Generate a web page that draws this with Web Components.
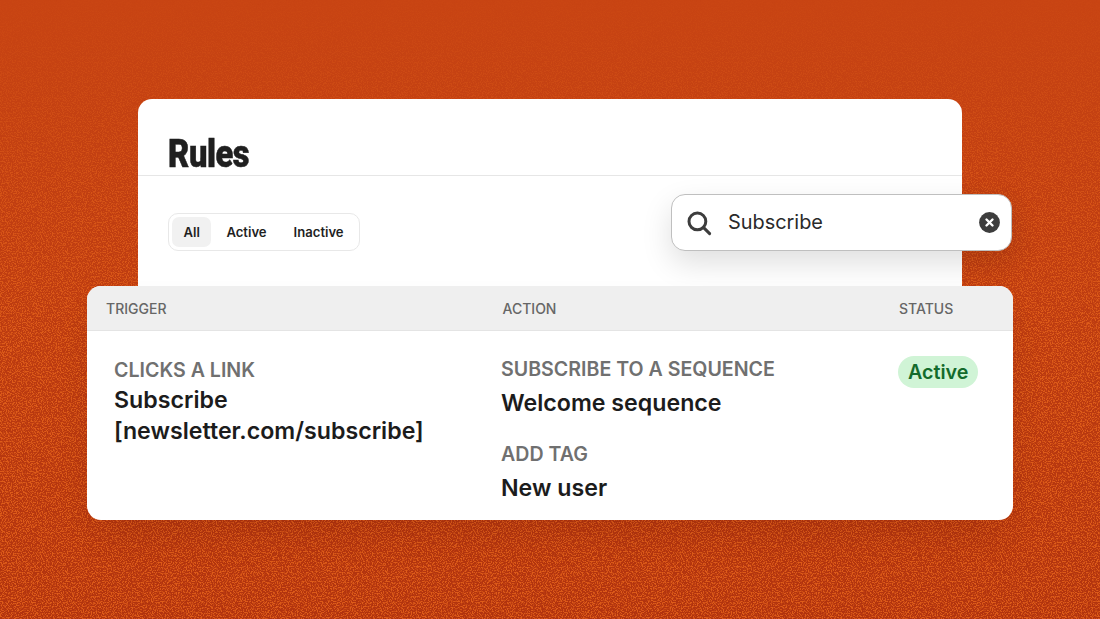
<!DOCTYPE html>
<html lang="en">
<head>
<meta charset="utf-8">
<title>Rules</title>
<style>
  html, body { margin: 0; height: 100%; overflow: hidden; }
  body { font-family: "Inter", "Liberation Sans", sans-serif; }
</style>
</head>
<body>
<noise-backdrop>
  <rules-card>
    <search-pill slot="search" value="Subscribe"></search-pill>
  </rules-card>
  <rules-table>
    <rule-entry slot="trigger" label="CLICKS A LINK">Subscribe<br>[newsletter.com/subscribe]</rule-entry>
    <rule-entry slot="action" label="SUBSCRIBE TO A SEQUENCE">Welcome sequence</rule-entry>
    <rule-entry slot="action" label="ADD TAG">New user</rule-entry>
    <status-badge slot="status">Active</status-badge>
  </rules-table>
</noise-backdrop>

<script>
class NoiseBackdrop extends HTMLElement {
  constructor() {
    super();
    const shadow = this.attachShadow({ mode: 'open' });
    shadow.innerHTML = `
      <style>
        :host {
          display: flex;
          flex-direction: column;
          align-items: center;
          position: relative;
          width: 1100px;
          height: 619px;
          padding-top: 99px;
          box-sizing: border-box;
          overflow: hidden;
          background: linear-gradient(180deg, #c84413 0%, #bf3d11 40%, #b1330e 100%);
        }
        svg {
          position: absolute;
          inset: 0;
          width: 100%;
          height: 100%;
          -webkit-mask-image: linear-gradient(180deg, rgba(0,0,0,.08) 0, rgba(0,0,0,.7) 190px, #000 330px);
          mask-image: linear-gradient(180deg, rgba(0,0,0,.08) 0, rgba(0,0,0,.7) 190px, #000 330px);
        }
        .content { position: relative; display: flex; flex-direction: column; align-items: center; }
      </style>
      <svg aria-hidden="true">
        <filter id="grain" x="0" y="0" width="100%" height="100%" color-interpolation-filters="sRGB">
          <feTurbulence type="fractalNoise" baseFrequency="0.8" numOctaves="2" seed="7"/>
          <feColorMatrix type="matrix" values="0 0 0 0 0.87  0 0 0 0 0.36  0 0 0 0 0.1  6 0 0 0 -2.8"/>
        </filter>
        <rect width="100%" height="100%" filter="url(#grain)"/>
      </svg>
      <div class="content"><slot></slot></div>
    `;
  }
}

class RulesCard extends HTMLElement {
  constructor() {
    super();
    const shadow = this.attachShadow({ mode: 'open' });
    shadow.innerHTML = `
      <style>
        :host {
          display: block;
          position: relative;
          width: 824px;
          height: 200px;
          margin-bottom: -13px;
          background: #fff;
          border-radius: 14px 14px 0 0;
        }
        header {
          height: 76.5px;
          box-sizing: border-box;
          padding: 32px 30px 0;
          border-bottom: 1px solid #e6e6e6;
        }
        h1 {
          margin: 0;
          font: 900 38px/46px "Roboto", "Liberation Sans", sans-serif;
          color: #1f1f1f;
          -webkit-text-stroke: .5px #1f1f1f;
          transform: scaleX(.86);
          transform-origin: left center;
          letter-spacing: -.5px;
        }
        .filters { padding: 37.5px 30px 0; display: flex; }
        .search { position: absolute; top: 95px; right: -50px; }
      </style>
      <header><h1>Rules</h1></header>
      <div class="filters"><filter-tabs></filter-tabs></div>
      <div class="search"><slot name="search"></slot></div>
    `;
  }
}

class FilterTabs extends HTMLElement {
  constructor() {
    super();
    const shadow = this.attachShadow({ mode: 'open' });
    shadow.innerHTML = `
      <style>
        :host {
          display: inline-flex;
          height: 38px;
          padding: 3px;
          box-sizing: border-box;
          border: 1.5px solid #e8e8e8;
          border-radius: 10px;
          font: 600 13.1px/31.5px "Inter", "Liberation Sans", sans-serif;
          color: #1f1f1f;
        }
        span { padding: 0 11.5px; border-radius: 7px; white-space: nowrap; }
        .on { background: #f1f1f1; }
        .mid { padding: 0 13.5px 0 15px; }
        .end { padding: 0 12px 0 13.5px; }
      </style>
      <span class="on">All</span><span class="mid">Active</span><span class="end">Inactive</span>
    `;
  }
}

class SearchPill extends HTMLElement {
  constructor() {
    super();
    const shadow = this.attachShadow({ mode: 'open' });
    shadow.innerHTML = `
      <style>
        :host {
          display: flex;
          align-items: center;
          width: 341px;
          height: 57px;
          box-sizing: border-box;
          padding: 0 11.5px 0 14px;
          background: #fff;
          border: 1.5px solid #bfbfbf;
          border-radius: 14px;
          box-shadow: 0 12px 30px rgba(0,0,0,.13);
          font: 400 19.9px/1 "Inter", "Liberation Sans", sans-serif;
          color: #2a2a2a;
        }
        .value { flex: 1; margin-left: 16px; }
        svg { display: block; flex: none; }
      </style>
      <svg width="26" height="26" viewBox="0 0 26 26" fill="none" stroke="#3d3d3d" stroke-width="3" stroke-linecap="round">
        <circle cx="11.4" cy="11.4" r="8.4"/><path d="M17.6 17.6L23.6 23.6"/>
      </svg>
      <span class="value"></span>
      <svg width="21" height="21" viewBox="0 0 21 21">
        <circle cx="10.5" cy="10.5" r="10.4" fill="#3d3d3d"/>
        <path d="M7.5 7.5l6 6M13.5 7.5l-6 6" stroke="#fff" stroke-width="2.4" stroke-linecap="round"/>
      </svg>
    `;
    shadow.querySelector('.value').textContent = this.getAttribute('value');
  }
}

class RulesTable extends HTMLElement {
  constructor() {
    super();
    const shadow = this.attachShadow({ mode: 'open' });
    shadow.innerHTML = `
      <style>
        :host {
          display: block;
          position: relative;
          width: 926px;
          height: 234px;
          background: #fff;
          border-radius: 14px;
          box-shadow: 0 20px 36px -8px rgba(60,10,0,.14);
          font-family: "Inter", "Liberation Sans", sans-serif;
        }
        .row { display: grid; grid-template-columns: 396.5px 396.5px 1fr; }
        .head {
          height: 45px;
          box-sizing: border-box;
          align-items: center;
          padding: 1px 0 0 19px;
          background: #efefef;
          border-bottom: 1px solid #e4e4e4;
          border-radius: 14px 14px 0 0;
          font-size: 14px;
          font-weight: 500;
          color: #666;
        }
        .body { padding: 25px 0 0 27px; grid-template-columns: 387px 397px 1fr; }
        .trigger { margin-top: 1px; --value-gap: 2px; }
        .action { display: flex; flex-direction: column; gap: 22px; --value-gap: 6px; }
      </style>
      <div class="row head"><span>TRIGGER</span><span>ACTION</span><span>STATUS</span></div>
      <div class="row body">
        <div class="trigger"><slot name="trigger"></slot></div>
        <div class="action"><slot name="action"></slot></div>
        <div><slot name="status"></slot></div>
      </div>
    `;
  }
}

class RuleEntry extends HTMLElement {
  constructor() {
    super();
    const shadow = this.attachShadow({ mode: 'open' });
    shadow.innerHTML = `
      <style>
        :host { display: block; }
        .label { font-size: 19.6px; line-height: 26px; font-weight: 600; color: #707070; }
        .value { font-size: 23.2px; line-height: 31px; font-weight: 600; color: #1c1c1c; margin-top: var(--value-gap, 3px); }
      </style>
      <div class="label"></div>
      <div class="value"><slot></slot></div>
    `;
    shadow.querySelector('.label').textContent = this.getAttribute('label');
  }
}

class StatusBadge extends HTMLElement {
  constructor() {
    super();
    const shadow = this.attachShadow({ mode: 'open' });
    shadow.innerHTML = `
      <style>
        :host {
          display: inline-block;
          height: 32px;
          padding: 0 10px;
          border-radius: 16px;
          background: #d0f4d6;
          color: #136b2c;
          font-size: 19.7px;
          font-weight: 600;
          line-height: 33px;
        }
      </style>
      <slot></slot>
    `;
  }
}

customElements.define('noise-backdrop', NoiseBackdrop);
customElements.define('rules-card', RulesCard);
customElements.define('filter-tabs', FilterTabs);
customElements.define('search-pill', SearchPill);
customElements.define('rules-table', RulesTable);
customElements.define('rule-entry', RuleEntry);
customElements.define('status-badge', StatusBadge);
</script>
</body>
</html>
